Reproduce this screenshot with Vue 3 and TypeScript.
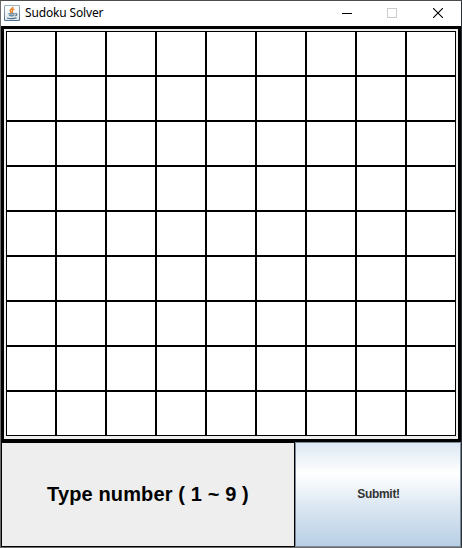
<script setup lang="ts">
import { ref } from 'vue'

const cells = ref<string[]>(Array.from({ length: 81 }, () => ''))
</script>

<template>
  <div class="window">
    <header class="titlebar">
      <svg class="app-icon" width="16" height="16" viewBox="0 0 16 16">
        <defs>
          <linearGradient id="tile" x1="0" y1="0" x2="0" y2="1">
            <stop offset="0" stop-color="#a5b5c2" />
            <stop offset="0.5" stop-color="#7890a5" />
            <stop offset="1" stop-color="#4e6e8e" />
          </linearGradient>
          <linearGradient id="face" x1="0" y1="0" x2="0" y2="1">
            <stop offset="0" stop-color="#ffffff" />
            <stop offset="1" stop-color="#dfe7ec" />
          </linearGradient>
        </defs>
        <rect width="16" height="16" rx="1" fill="url(#tile)" />
        <rect x="1" y="1" width="14" height="14" rx="0.5" fill="url(#face)" />
        <path d="M8.800 1.800C9.300 3.800 5.600 4.100 6.200 6c.2.800 1.100 1.400 1.400 2M10.300 4C8.300 4.800 7.800 5.500 8.400 6.500c.3.500.2 1-.3 1.500" fill="none" stroke="#e98128" stroke-width="1.400" />
        <path d="M4.500 8.900h6.200M5 10.500q2.600.7 5.300 0M3 13q4.500 1.200 9.600-.1M11 8.800c2.600-.5 2.300 1.700.2 2.200" fill="none" stroke="#4f7291" stroke-width="1.100" />
      </svg>
      <span class="title">Sudoku Solver</span>
      <div class="controls">
        <svg width="10" height="10" viewBox="0 0 10 10" shape-rendering="crispEdges">
          <path d="M0 5.500H10" stroke="#000" />
        </svg>
        <svg width="10" height="10" viewBox="0 0 10 10" shape-rendering="crispEdges">
          <rect x="0.5" y="0.5" width="9" height="9" fill="none" stroke="#ccc" />
        </svg>
        <svg class="close" width="10" height="10" viewBox="0 0 10 10">
          <path d="M0 0L10 10M10 0L0 10" stroke="#000" stroke-width="1.100" />
        </svg>
      </div>
    </header>
    <main class="board">
      <div v-for="(value, i) in cells" :key="i" class="cell">{{ value }}</div>
    </main>
    <footer class="footer">
      <div class="prompt"><span>Type number ( 1 ~ 9 )</span></div>
      <button class="submit" type="button"><span>Submit!</span></button>
    </footer>
  </div>
</template>

<style scoped>
.window {
  box-sizing: border-box;
  width: 462px;
  height: 548px;
  display: flex;
  flex-direction: column;
  border: 1px solid #6b6b6b;
  border-top-color: #4a4c4f;
  border-right-color: #2b3035;
  background: #eee;
}
.titlebar {
  box-sizing: border-box;
  height: 25px;
  flex: none;
  display: flex;
  align-items: center;
  padding: 0 0 1px 3px;
  background: #fff;
}
.app-icon {
  flex: none;
}
.title {
  margin-left: 5px;
  font: 12px/16px 'Noto Sans', sans-serif;
  letter-spacing: -0.15px;
  color: #000;
  white-space: pre;
}
.controls {
  margin-left: auto;
  margin-right: 18px;
  display: flex;
  gap: 35px;
}
.controls svg {
  display: block;
}
.controls .close {
  margin-left: 1px;
}
.board {
  box-sizing: border-box;
  height: 416px;
  flex: none;
  display: grid;
  grid-template-columns: repeat(9, 50px);
  grid-template-rows: repeat(9, 45px);
  border: 3px solid #000;
  padding: 2px;
}
.cell {
  display: flex;
  align-items: center;
  justify-content: center;
  border: 1px solid #000;
  background: #fff;
  font: bold 20px 'Liberation Sans', sans-serif;
}
.footer {
  flex: 1;
  display: flex;
}
.prompt {
  box-sizing: border-box;
  width: 294px;
  display: flex;
  align-items: center;
  justify-content: center;
  padding-bottom: 2px;
  border: 1px solid #000;
  font: bold 20px/24px 'Liberation Sans', sans-serif;
  letter-spacing: 0.13px;
  color: #000;
}
.submit {
  flex: 1;
  display: flex;
  align-items: center;
  justify-content: center;
  margin: 0;
  padding: 0 0 2px 1px;
  border: 1px solid #7a8a99;
  border-radius: 0;
  background: linear-gradient(#dde8f3 0%, #fff 30%, #dde8f3 60%, #b8cfe5 100%);
  font: bold 12px/16px 'Liberation Sans', sans-serif;
  letter-spacing: -0.3px;
  color: #333;
}
</style>

<style>
body {
  margin: 0;
}
</style>
